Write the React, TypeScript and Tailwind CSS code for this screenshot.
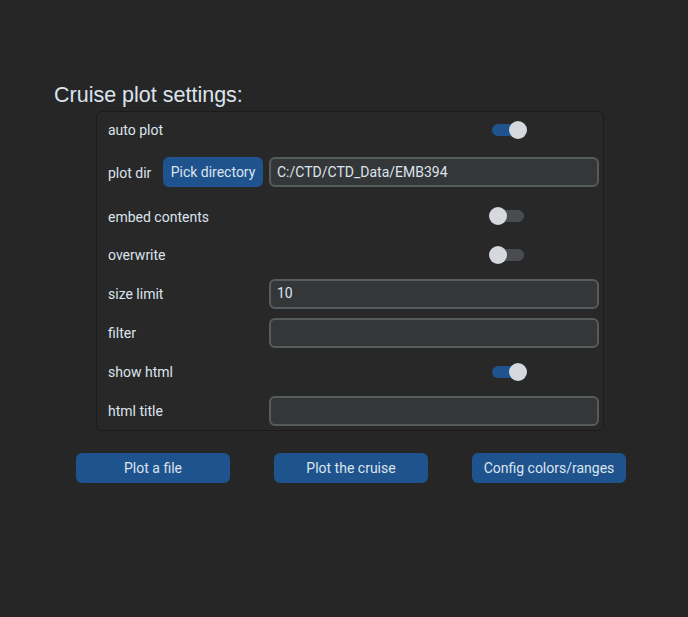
const text = 'text-[#dce4ee]'

function Switch({ on }: { on: boolean }) {
  return (
    <div className="relative h-[18px] w-[38px]">
      <div
        className={`absolute left-[3px] top-[3px] h-[12px] w-[32px] rounded-full ${
          on ? 'bg-[#1f538d]' : 'bg-[#4a4d50]'
        }`}
      />
      <div
        className={`absolute top-0 h-[18px] w-[18px] rounded-full bg-[#d5d9de] ${
          on ? 'left-[20px]' : 'left-0'
        }`}
      />
    </div>
  )
}

function Field({ value = '' }: { value?: string }) {
  return (
    <div className="flex h-[30px] flex-1 items-center rounded-[6px] border-2 border-[#565b5e] bg-[#343638] px-[6px] text-[14px]">
      {value}
    </div>
  )
}

function Row({
  label,
  h,
  children,
}: {
  label: string
  h: string
  children?: React.ReactNode
}) {
  return (
    <div className={`flex items-center ${h}`}>
      <div className="w-[161px] shrink-0 pt-[2px] text-[14px]">{label}</div>
      {children}
    </div>
  )
}

function Btn({ children }: { children: React.ReactNode }) {
  return (
    <div className="flex h-[30px] w-[154px] items-center justify-center rounded-[6px] bg-[#1f538d] text-[14px]">
      {children}
    </div>
  )
}

export default function App() {
  return (
    <div
      className={`h-[617px] w-[688px] bg-[#262626] pl-[54px] pt-[84px] ${text}`}
      style={{ fontFamily: 'Roboto, sans-serif' }}
    >
      {/* title */}
      <div
        className="h-[27px] text-[21.5px] leading-[22px]"
        style={{ fontFamily: '"Liberation Sans", Arial, sans-serif' }}
      >
        Cruise plot settings:
      </div>

      {/* settings panel */}
      <div className="ml-[42px] flex w-[508px] flex-col rounded-[6px] border border-[#1b1b1b] bg-[#282828] pl-[11px] pr-[4px]">
        <Row label="auto plot" h="h-[35px]">
          <div className="pl-[220px]">
            <Switch on />
          </div>
        </Row>

        {/* plot dir has its own button */}
        <div className="flex h-[50px] items-center">
          <div className="w-[55px] shrink-0 pt-[2px] text-[14px]">plot dir</div>
          <div className="mr-[6px] flex h-[30px] w-[100px] items-center justify-center rounded-[6px] bg-[#1f538d] text-[14px]">
            Pick directory
          </div>
          <Field value="C:/CTD/CTD_Data/EMB394" />
        </div>

        <Row label="embed contents" h="h-[38px]">
          <div className="pl-[220px]">
            <Switch on={false} />
          </div>
        </Row>
        <Row label="overwrite" h="h-[39px]">
          <div className="pl-[220px]">
            <Switch on={false} />
          </div>
        </Row>
        <Row label="size limit" h="h-[39px]">
          <Field value="10" />
        </Row>
        <Row label="filter" h="h-[39px]">
          <Field />
        </Row>
        <Row label="show html" h="h-[39px]">
          <div className="pl-[220px]">
            <Switch on />
          </div>
        </Row>
        <Row label="html title" h="h-[39px]">
          <Field />
        </Row>
      </div>

      {/* action buttons */}
      <div className="ml-[22px] mt-[22px] flex gap-[44px]">
        <Btn>Plot a file</Btn>
        <Btn>Plot the cruise</Btn>
        <Btn>Config colors/ranges</Btn>
      </div>
    </div>
  )
}
